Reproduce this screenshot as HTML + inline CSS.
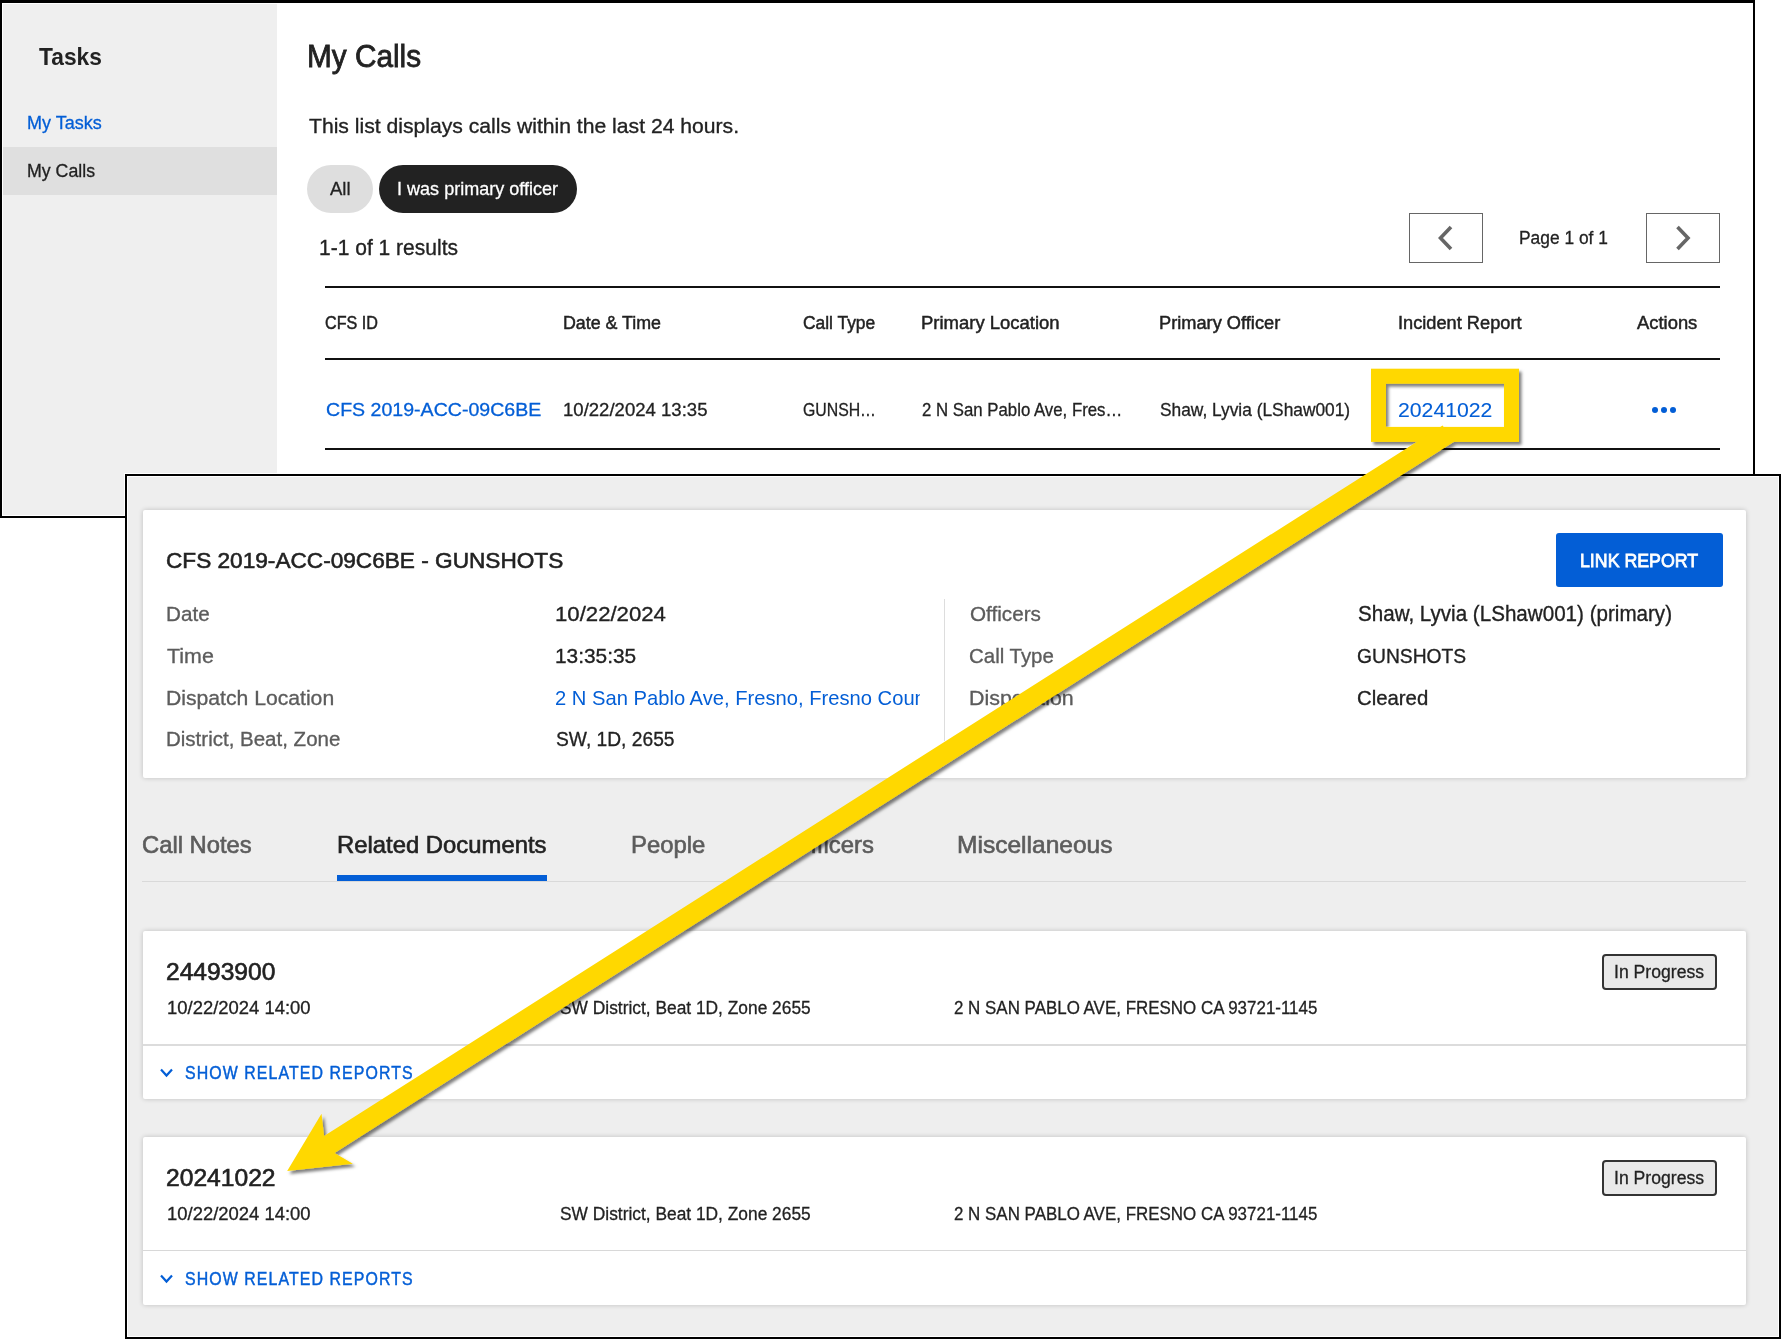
<!DOCTYPE html>
<html>
<head>
<meta charset="utf-8">
<style>
html,body{margin:0;padding:0;}
body{width:1781px;height:1339px;position:relative;overflow:hidden;background:#ffffff;font-family:"Liberation Sans",sans-serif;}
.a{position:absolute;}
.t{position:absolute;white-space:nowrap;transform-origin:0 0;font-family:"Liberation Sans",sans-serif;}
.card{position:absolute;background:#fff;border-radius:2px;box-shadow:0 0 5px rgba(0,0,0,0.2);}
</style>
</head>
<body>
<!-- ===== Frame 1 ===== -->
<div class="a" style="left:0;top:0;width:1755px;height:518px;background:#000;"></div>
<div class="a" style="left:2px;top:3px;width:1751px;height:513px;background:#fff;"></div>
<div class="a" style="left:3px;top:4px;width:274px;height:511px;background:#efefef;"></div>
<div class="a" style="left:3px;top:147px;width:274px;height:48px;background:#dfdfdf;"></div>
<!-- pills -->
<div class="a" style="left:307px;top:165px;width:66px;height:48px;border-radius:24px;background:#dedede;"></div>
<div class="a" style="left:379px;top:165px;width:198px;height:48px;border-radius:24px;background:#222222;"></div>
<!-- pagination -->
<div class="a" style="left:1409px;top:213px;width:72px;height:48px;border:1px solid #666;"></div>
<div class="a" style="left:1646px;top:213px;width:72px;height:48px;border:1px solid #666;"></div>
<svg class="a" style="left:0;top:0" width="1781" height="520">
  <polyline points="1451,227 1440.5,238 1451,249" fill="none" stroke="#666" stroke-width="3.6" stroke-linecap="butt" stroke-linejoin="miter"/>
  <polyline points="1677.5,227 1688,238 1677.5,249" fill="none" stroke="#666" stroke-width="3.6" stroke-linecap="butt" stroke-linejoin="miter"/>
</svg>
<!-- table lines -->
<div class="a" style="left:325px;top:286px;width:1395px;height:2px;background:#111;"></div>
<div class="a" style="left:325px;top:358px;width:1395px;height:2px;background:#111;"></div>
<div class="a" style="left:325px;top:448px;width:1395px;height:2px;background:#111;"></div>
<!-- dots -->
<div class="a" style="left:1652px;top:407px;width:6px;height:6px;border-radius:3px;background:#035ed6;"></div>
<div class="a" style="left:1661px;top:407px;width:6px;height:6px;border-radius:3px;background:#035ed6;"></div>
<div class="a" style="left:1670px;top:407px;width:6px;height:6px;border-radius:3px;background:#035ed6;"></div>

<!-- ===== Frame 2 ===== -->
<div class="a" style="left:124px;top:473px;width:1657px;height:866px;background:#fff;"></div>
<div class="a" style="left:125px;top:474px;width:1656px;height:865px;background:#000;"></div>
<div class="a" style="left:127px;top:476px;width:1652px;height:861px;background:#fff;"></div>
<div class="a" style="left:128px;top:477px;width:1650px;height:859px;background:#eeeeee;"></div>
<div class="a" style="left:1753px;top:470px;width:2px;height:5px;background:#000;"></div>
<div class="a" style="left:120px;top:516px;width:6px;height:2px;background:#000;"></div>

<!-- card 1 -->
<div class="card" style="left:143px;top:510px;width:1603px;height:268px;"></div>
<div class="a" style="left:944px;top:599px;width:1px;height:142px;background:#dddddd;"></div>
<div class="a" style="left:1556px;top:533px;width:167px;height:54px;border-radius:3px;background:#035ed6;"></div>

<!-- tabs -->
<div class="a" style="left:142px;top:881px;width:1604px;height:1px;background:#d9d9d9;"></div>
<div class="a" style="left:337px;top:875px;width:210px;height:6px;background:#035ed6;"></div>

<!-- doc cards -->
<div class="card" style="left:143px;top:931px;width:1603px;height:168px;"></div>
<div class="a" style="left:143px;top:1044px;width:1603px;height:2px;background:#dcdcdc;"></div>
<div class="a" style="left:1602px;top:954px;width:111px;height:32px;border:2px solid #333;border-radius:4px;background:#e9e9e9;"></div>
<svg class="a" style="left:158px;top:1066px" width="18" height="14"><polyline points="3,3.5 8.5,9.5 14,3.5" fill="none" stroke="#035ed6" stroke-width="2.2"/></svg>

<div class="card" style="left:143px;top:1137px;width:1603px;height:168px;"></div>
<div class="a" style="left:143px;top:1250px;width:1603px;height:1px;background:#d8d8d8;"></div>
<div class="a" style="left:1602px;top:1160px;width:111px;height:32px;border:2px solid #333;border-radius:4px;background:#e9e9e9;"></div>
<svg class="a" style="left:158px;top:1272px" width="18" height="14"><polyline points="3,3.5 8.5,9.5 14,3.5" fill="none" stroke="#035ed6" stroke-width="2.2"/></svg>

<!-- ===== texts ===== -->
<span class="t" style="left:38.90px;top:45.00px;font-size:24.0px;line-height:24.0px;font-weight:bold;color:#222222;transform:scaleX(0.9496);">Tasks</span>
<span class="t" style="left:26.50px;top:113.90px;font-size:18.0px;line-height:18.0px;font-weight:normal;color:#035ed6;transform:scaleX(0.9999);-webkit-text-stroke:0.29px #035ed6;">My Tasks</span>
<span class="t" style="left:26.54px;top:162.00px;font-size:18.5px;line-height:18.5px;font-weight:normal;color:#222222;transform:scaleX(0.9602);-webkit-text-stroke:0.30px #222222;">My Calls</span>
<span class="t" style="left:306.85px;top:40.80px;font-size:30.5px;line-height:30.5px;font-weight:normal;color:#222222;transform:scaleX(0.9758);-webkit-text-stroke:0.79px #222222;">My Calls</span>
<span class="t" style="left:308.80px;top:115.00px;font-size:21.0px;line-height:21.0px;font-weight:normal;color:#222222;transform:scaleX(1.0067);-webkit-text-stroke:0.34px #222222;">This list displays calls within the last 24 hours.</span>
<span class="t" style="left:330.30px;top:179.40px;font-size:19.0px;line-height:19.0px;font-weight:normal;color:#222222;transform:scaleX(0.9752);-webkit-text-stroke:0.30px #222222;">All</span>
<span class="t" style="left:396.75px;top:179.40px;font-size:19.0px;line-height:19.0px;font-weight:normal;color:#ffffff;transform:scaleX(0.9497);-webkit-text-stroke:0.30px #ffffff;">I was primary officer</span>
<span class="t" style="left:319.22px;top:238.20px;font-size:21.5px;line-height:21.5px;font-weight:normal;color:#222222;transform:scaleX(0.9775);-webkit-text-stroke:0.34px #222222;">1-1 of 1 results</span>
<span class="t" style="left:1519.03px;top:228.90px;font-size:18.0px;line-height:18.0px;font-weight:normal;color:#222222;transform:scaleX(0.9653);-webkit-text-stroke:0.29px #222222;">Page 1 of 1</span>
<span class="t" style="left:325.10px;top:313.80px;font-size:18px;line-height:18px;font-weight:normal;color:#222222;transform:scaleX(0.8966);-webkit-text-stroke:0.47px #222222;">CFS ID</span>
<span class="t" style="left:562.71px;top:313.80px;font-size:18px;line-height:18px;font-weight:normal;color:#222222;transform:scaleX(0.9893);-webkit-text-stroke:0.47px #222222;">Date &amp; Time</span>
<span class="t" style="left:802.50px;top:313.80px;font-size:18px;line-height:18px;font-weight:normal;color:#222222;transform:scaleX(0.9664);-webkit-text-stroke:0.47px #222222;">Call Type</span>
<span class="t" style="left:920.67px;top:313.80px;font-size:18px;line-height:18px;font-weight:normal;color:#222222;transform:scaleX(1.0260);-webkit-text-stroke:0.47px #222222;">Primary Location</span>
<span class="t" style="left:1159.39px;top:313.80px;font-size:18px;line-height:18px;font-weight:normal;color:#222222;transform:scaleX(1.0128);-webkit-text-stroke:0.47px #222222;">Primary Officer</span>
<span class="t" style="left:1397.99px;top:313.80px;font-size:18px;line-height:18px;font-weight:normal;color:#222222;transform:scaleX(1.0118);-webkit-text-stroke:0.47px #222222;">Incident Report</span>
<span class="t" style="left:1637.40px;top:313.80px;font-size:18px;line-height:18px;font-weight:normal;color:#222222;transform:scaleX(1.0216);-webkit-text-stroke:0.47px #222222;">Actions</span>
<span class="t" style="left:325.80px;top:401.10px;font-size:18.5px;line-height:18.5px;font-weight:normal;color:#035ed6;transform:scaleX(1.0574);-webkit-text-stroke:0.30px #035ed6;">CFS 2019-ACC-09C6BE</span>
<span class="t" style="left:563.30px;top:401.10px;font-size:18.5px;line-height:18.5px;font-weight:normal;color:#222222;transform:scaleX(1.0032);-webkit-text-stroke:0.30px #222222;">10/22/2024 13:35</span>
<span class="t" style="left:802.50px;top:401.10px;font-size:18.5px;line-height:18.5px;font-weight:normal;color:#222222;transform:scaleX(0.8550);-webkit-text-stroke:0.30px #222222;">GUNSH…</span>
<span class="t" style="left:922.10px;top:401.10px;font-size:18.5px;line-height:18.5px;font-weight:normal;color:#222222;transform:scaleX(0.9071);-webkit-text-stroke:0.30px #222222;">2 N San Pablo Ave, Fres…</span>
<span class="t" style="left:1160.10px;top:401.10px;font-size:18.5px;line-height:18.5px;font-weight:normal;color:#222222;transform:scaleX(0.9370);-webkit-text-stroke:0.30px #222222;">Shaw, Lyvia (LShaw001)</span>
<span class="t" style="left:1398.19px;top:398.90px;font-size:21.0px;line-height:21.0px;font-weight:normal;color:#035ed6;transform:scaleX(1.0103);-webkit-text-stroke:0.10px #035ed6;">20241022</span>
<span class="t" style="left:166.09px;top:550.20px;font-size:22.5px;line-height:22.5px;font-weight:normal;color:#222222;transform:scaleX(1.0054);-webkit-text-stroke:0.58px #222222;">CFS 2019-ACC-09C6BE - GUNSHOTS</span>
<span class="t" style="left:165.99px;top:603.90px;font-size:20.5px;line-height:20.5px;font-weight:normal;color:#5c5c5c;transform:scaleX(1.0071);-webkit-text-stroke:0.33px #5c5c5c;">Date</span>
<span class="t" style="left:167.00px;top:645.00px;font-size:21.0px;line-height:21.0px;font-weight:normal;color:#5c5c5c;transform:scaleX(1.0198);-webkit-text-stroke:0.34px #5c5c5c;">Time</span>
<span class="t" style="left:165.97px;top:687.80px;font-size:20.5px;line-height:20.5px;font-weight:normal;color:#5c5c5c;transform:scaleX(1.0318);-webkit-text-stroke:0.33px #5c5c5c;">Dispatch Location</span>
<span class="t" style="left:165.97px;top:729.40px;font-size:20.0px;line-height:20.0px;font-weight:normal;color:#5c5c5c;transform:scaleX(1.0252);-webkit-text-stroke:0.32px #5c5c5c;">District, Beat, Zone</span>
<span class="t" style="left:554.94px;top:603.10px;font-size:21.0px;line-height:21.0px;font-weight:normal;color:#222222;transform:scaleX(1.0553);-webkit-text-stroke:0.34px #222222;">10/22/2024</span>
<span class="t" style="left:555.01px;top:645.00px;font-size:21.0px;line-height:21.0px;font-weight:normal;color:#222222;transform:scaleX(0.9929);-webkit-text-stroke:0.34px #222222;">13:35:35</span>
<span class="t" style="left:556.00px;top:729.40px;font-size:20.0px;line-height:20.0px;font-weight:normal;color:#222222;transform:scaleX(0.9605);-webkit-text-stroke:0.32px #222222;">SW, 1D, 2655</span>
<span class="t" style="left:969.60px;top:603.60px;font-size:20.0px;line-height:20.0px;font-weight:normal;color:#5c5c5c;transform:scaleX(1.0345);-webkit-text-stroke:0.32px #5c5c5c;">Officers</span>
<span class="t" style="left:968.63px;top:645.00px;font-size:21.0px;line-height:21.0px;font-weight:normal;color:#5c5c5c;transform:scaleX(0.9737);-webkit-text-stroke:0.34px #5c5c5c;">Call Type</span>
<span class="t" style="left:968.58px;top:687.00px;font-size:21.0px;line-height:21.0px;font-weight:normal;color:#5c5c5c;transform:scaleX(1.0195);-webkit-text-stroke:0.34px #5c5c5c;">Disposition</span>
<span class="t" style="left:1358.40px;top:604.40px;font-size:21.5px;line-height:21.5px;font-weight:normal;color:#222222;transform:scaleX(0.9579);-webkit-text-stroke:0.34px #222222;">Shaw, Lyvia (LShaw001) (primary)</span>
<span class="t" style="left:1357.48px;top:645.00px;font-size:21.0px;line-height:21.0px;font-weight:normal;color:#222222;transform:scaleX(0.9169);-webkit-text-stroke:0.34px #222222;">GUNSHOTS</span>
<span class="t" style="left:1357.43px;top:687.00px;font-size:21.0px;line-height:21.0px;font-weight:normal;color:#222222;transform:scaleX(0.9685);-webkit-text-stroke:0.34px #222222;">Cleared</span>
<span class="t" style="left:1579.57px;top:550.50px;font-size:19.0px;line-height:19.0px;font-weight:normal;color:#ffffff;transform:scaleX(0.9345);-webkit-text-stroke:0.80px #ffffff;">LINK REPORT</span>
<span class="t" style="left:142.21px;top:833.00px;font-size:24.0px;line-height:24.0px;font-weight:normal;color:#5c5c5c;transform:scaleX(0.9908);-webkit-text-stroke:0.62px #5c5c5c;">Call Notes</span>
<span class="t" style="left:337.01px;top:833.00px;font-size:24.0px;line-height:24.0px;font-weight:normal;color:#222222;transform:scaleX(0.9939);-webkit-text-stroke:0.62px #222222;">Related Documents</span>
<span class="t" style="left:630.81px;top:833.00px;font-size:24.0px;line-height:24.0px;font-weight:normal;color:#5c5c5c;transform:scaleX(0.9948);-webkit-text-stroke:0.62px #5c5c5c;">People</span>
<span class="t" style="left:792.39px;top:833.00px;font-size:24.0px;line-height:24.0px;font-weight:normal;color:#5c5c5c;transform:scaleX(0.9948);-webkit-text-stroke:0.62px #5c5c5c;">Officers</span>
<span class="t" style="left:956.98px;top:833.00px;font-size:24.0px;line-height:24.0px;font-weight:normal;color:#5c5c5c;transform:scaleX(1.0227);-webkit-text-stroke:0.62px #5c5c5c;">Miscellaneous</span>
<span class="t" style="left:165.93px;top:961.00px;font-size:23.0px;line-height:23.0px;font-weight:normal;color:#222222;transform:scaleX(1.0682);-webkit-text-stroke:0.60px #222222;">24493900</span>
<span class="t" style="left:166.90px;top:999.00px;font-size:18.5px;line-height:18.5px;font-weight:normal;color:#222222;transform:scaleX(0.9969);-webkit-text-stroke:0.30px #222222;">10/22/2024 14:00</span>
<span class="t" style="left:560.20px;top:999.00px;font-size:18.0px;line-height:18.0px;font-weight:normal;color:#222222;transform:scaleX(0.9639);-webkit-text-stroke:0.29px #222222;">SW District, Beat 1D, Zone 2655</span>
<span class="t" style="left:954.20px;top:999.00px;font-size:18.0px;line-height:18.0px;font-weight:normal;color:#222222;transform:scaleX(0.9409);-webkit-text-stroke:0.29px #222222;">2 N SAN PABLO AVE, FRESNO CA 93721-1145</span>
<span class="t" style="left:1614.22px;top:963.20px;font-size:18.0px;line-height:18.0px;font-weight:normal;color:#222222;transform:scaleX(0.9787);-webkit-text-stroke:0.29px #222222;">In Progress</span>
<span class="t" style="left:184.90px;top:1064.70px;font-size:17.5px;line-height:17.5px;font-weight:normal;color:#035ed6;transform:scaleX(0.9080);-webkit-text-stroke:0.45px #035ed6;letter-spacing:1.2px;">SHOW RELATED REPORTS</span>
<span class="t" style="left:165.93px;top:1167.00px;font-size:23.0px;line-height:23.0px;font-weight:normal;color:#222222;transform:scaleX(1.0702);-webkit-text-stroke:0.60px #222222;">20241022</span>
<span class="t" style="left:166.90px;top:1205.00px;font-size:18.5px;line-height:18.5px;font-weight:normal;color:#222222;transform:scaleX(0.9969);-webkit-text-stroke:0.30px #222222;">10/22/2024 14:00</span>
<span class="t" style="left:560.20px;top:1205.00px;font-size:18.0px;line-height:18.0px;font-weight:normal;color:#222222;transform:scaleX(0.9639);-webkit-text-stroke:0.29px #222222;">SW District, Beat 1D, Zone 2655</span>
<span class="t" style="left:954.20px;top:1205.00px;font-size:18.0px;line-height:18.0px;font-weight:normal;color:#222222;transform:scaleX(0.9409);-webkit-text-stroke:0.29px #222222;">2 N SAN PABLO AVE, FRESNO CA 93721-1145</span>
<span class="t" style="left:1614.22px;top:1169.20px;font-size:18.0px;line-height:18.0px;font-weight:normal;color:#222222;transform:scaleX(0.9787);-webkit-text-stroke:0.29px #222222;">In Progress</span>
<span class="t" style="left:184.90px;top:1270.70px;font-size:17.5px;line-height:17.5px;font-weight:normal;color:#035ed6;transform:scaleX(0.9080);-webkit-text-stroke:0.45px #035ed6;letter-spacing:1.2px;">SHOW RELATED REPORTS</span>
<!-- clipped dispatch location -->
<div class="a" style="left:540px;top:680px;width:380px;height:35px;overflow:hidden;"><span class="t" style="left:15.04px;top:7.00px;font-size:21px;line-height:21px;color:#035ed6;transform:scaleX(0.9607);">2 N San Pablo Ave, Fresno, Fresno County</span></div>

<!-- ===== annotation ===== -->
<svg class="a" style="left:0;top:0" width="1781" height="1339">
  <defs>
    <filter id="ds" x="-10%" y="-10%" width="130%" height="130%">
      <feDropShadow dx="2.5" dy="3" stdDeviation="1.8" flood-color="#000" flood-opacity="0.5"/>
    </filter>
  </defs>
  <g filter="url(#ds)">
    <rect x="1378.5" y="376.2" width="133" height="58.2" fill="none" stroke="#ffd800" stroke-width="15"/>
    <polygon points="1442.6,425.4 1454,441.8 334.5,1153 352.9,1163.8 287.2,1170.9 321.5,1113.8 324.1,1136" fill="#ffd800"/>
  </g>
</svg>
</body>
</html>
